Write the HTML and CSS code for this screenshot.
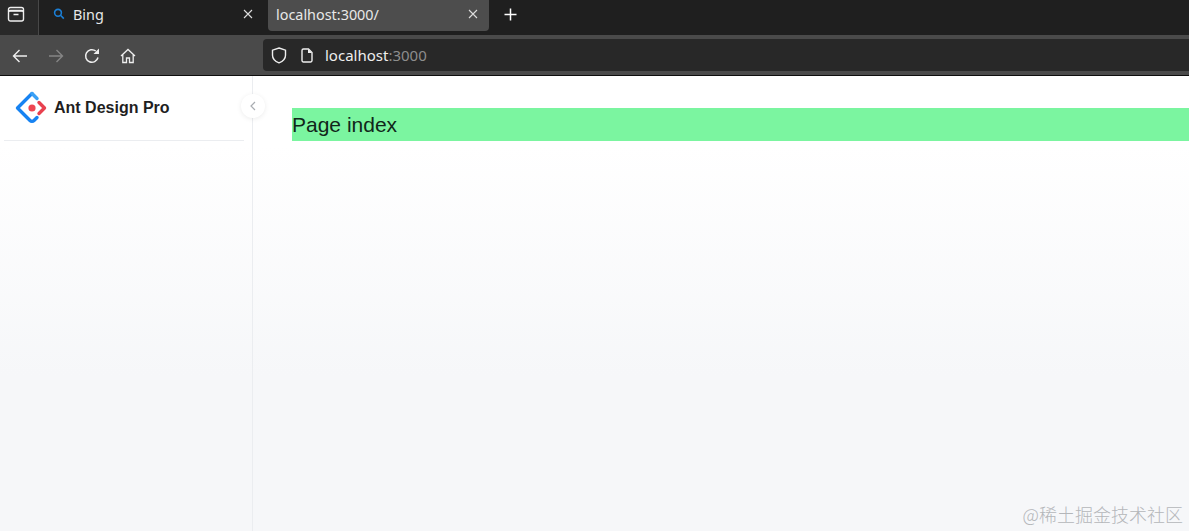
FILE: index.html
```html
<!DOCTYPE html>
<html lang="en">
<head>
<meta charset="utf-8">
<title>localhost:3000</title>
<link rel="stylesheet" href="styles.css">
</head>
<body>
<div class="browser">
  <div class="tabbar">
    <div class="tabs-btn">
      <svg width="18" height="18" viewBox="0 0 18 18" fill="none" stroke="#eee" stroke-width="1.400"><rect x="1.500" y="5.500" width="15" height="10.500" rx="2"/><path d="M3.500 2.500h11a2 2 0 0 1 2 2v1.500h-15V4.500a2 2 0 0 1 2-2zM6.500 9.500h5"/></svg>
    </div>
    <div class="tab">
      <svg class="tab-icon" width="12" height="12" viewBox="0 0 12 12" fill="none" stroke="#1b7fd6" stroke-width="1.600"><circle cx="5" cy="4.800" r="3.400"/><path d="M7.500 7.300l3.300 3.300"/></svg>
      <span class="tab-title">Bing</span>
      <svg class="tab-close" width="10" height="10" viewBox="0 0 10 10" stroke="#ddd" stroke-width="1.100"><path d="M1 1l8 8M9 1l-8 8"/></svg>
    </div>
    <div class="tab tab-active">
      <span class="tab-title">localhost:3000/</span>
      <svg class="tab-close" width="10" height="10" viewBox="0 0 10 10" stroke="#ddd" stroke-width="1.100"><path d="M1 1l8 8M9 1l-8 8"/></svg>
    </div>
    <svg class="new-tab" width="13" height="13" viewBox="0 0 13 13" stroke="#fff" stroke-width="1.500"><path d="M6.500 0.500v12M0.500 6.500h12"/></svg>
  </div>
  <div class="toolbar">
    <div class="nav">
      <svg class="nav-icon" width="16" height="16" viewBox="0 0 16 16" fill="none" stroke="#eee" stroke-width="1.400"><path d="M15 8H1.500M7.500 2L1.500 8l6 6"/></svg>
      <svg class="nav-icon" width="16" height="16" viewBox="0 0 16 16" fill="none" stroke="#858585" stroke-width="1.400"><path d="M1 8h13.500M8.500 2l6 6-6 6"/></svg>
      <svg class="nav-icon" width="16" height="16" viewBox="0 0 16 16" fill="none" stroke="#eee" stroke-width="1.500"><path d="M14 9.500A6.300 6.300 0 1 1 11.800 3"/><path d="M15 0.500v5.500h-5.500z" fill="#eee" stroke="none"/></svg>
      <svg class="nav-icon" width="16" height="16" viewBox="0 0 16 16" fill="none" stroke="#eee" stroke-width="1.300"><path d="M1 8l7-6.500L15 8M2.800 6.500v8h3.700v-4.500h3v4.500h3.700v-8"/></svg>
    </div>
    <div class="urlbar">
      <svg class="shield" width="16" height="17" viewBox="0 0 16 17" fill="none" stroke="#eee" stroke-width="1.400"><path d="M8 1l6.500 2.200v5c0 3.600-3 6.300-6.500 7.600-3.500-1.300-6.500-4-6.500-7.600v-5z"/></svg>
      <svg class="page" width="12" height="15" viewBox="0 0 12 15" fill="none" stroke="#eee" stroke-width="1.400"><path d="M1 2.500a1.500 1.500 0 0 1 1.500-1.500h5L11 4.500v8a1.500 1.500 0 0 1-1.500 1.500h-7A1.500 1.500 0 0 1 1 12.500z"/><path d="M7 1v4h4" fill="#eee" stroke="none"/></svg>
      <span class="url">localhost<span class="url-dim">:3000</span></span>
    </div>
  </div>
</div>
<div class="app">
  <aside class="sider">
    <div class="logo-row">
      <svg class="logo" width="34" height="34" viewBox="0 0 34 34" fill="none">
        <path d="M17 2.500L2.500 17 15 29.500c1.100 1.100 2.900 1.100 4 0l3-3" stroke="#1783f2" stroke-width="3.400" stroke-linecap="round" stroke-linejoin="round"/>
        <path d="M17 2.500l5 5" stroke="#3aa0f5" stroke-width="3.400" stroke-linecap="round"/>
        <path d="M24 11.500l5.500 5.500-5.500 5.500" stroke="#e8414f" stroke-width="3.400" stroke-linecap="round" stroke-linejoin="round"/>
        <circle cx="17" cy="17" r="3.600" fill="#ee4652"/>
      </svg>
      <span class="brand">Ant Design Pro</span>
    </div>
    <div class="sider-rule"></div>
    <button class="collapse" type="button" aria-label="Collapse">
      <svg width="6" height="10" viewBox="0 0 6 10" fill="none" stroke="#a9acb1" stroke-width="1.200"><path d="M5 1L1 5l4 4"/></svg>
    </button>
  </aside>
  <main class="content">
    <div class="page-index">Page index</div>
  </main>
</div>
<div class="watermark">@稀土掘金技术社区</div>
</body>
</html>
```
FILE: styles.css
```css
* { box-sizing: border-box; }
html, body { height: 100%; }
body {
  margin: 0;
  height: 531px;
  overflow: hidden;
  display: flex;
  flex-direction: column;
  font-family: "Liberation Sans", Arial, sans-serif;
  background: #fff;
  position: relative;
}
.browser { flex: none; font-family: "Noto Sans", Roboto, sans-serif; }
.tabbar {
  height: 35px;
  background: #1f1f1f;
  display: flex;
  align-items: flex-start;
}
.tabs-btn {
  width: 39px;
  height: 35px;
  background: #292929;
  border-right: 1px solid #484848;
  padding: 0 0 7px 7px;
  display: flex;
  align-items: center;
}
.tab {
  width: 229px;
  height: 31px;
  padding: 0 15px 3px 14px;
  display: flex;
  align-items: center;
  color: #e8e8e8;
  font-size: 14.400px;
  border-radius: 0 0 4px 4px;
}
.tab-icon { margin-right: 8px; }
.tab-title { flex: 1; }
.tab-active {
  width: 221px;
  background: #4d4d4d;
  padding-left: 8px;
  padding-right: 11px;
}
.new-tab { margin: 8px 0 0 15px; }
.toolbar {
  height: 41px;
  background: #4a4a4a;
  border-bottom: 1px solid #0e0e0e;
  display: flex;
  align-items: center;
}
.nav {
  width: 263px;
  flex: none;
  display: flex;
  gap: 20px;
  padding: 2px 0 0 12px;
  align-items: center;
}
.urlbar {
  flex: 1;
  height: 32px;
  background: #282828;
  border-radius: 4px 0 0 4px;
  display: flex;
  align-items: center;
  padding-left: 8px;
  color: #eee;
  font-size: 15px;
}
.page { margin-left: 14px; }
.url { margin-left: 12px; }
.url-dim { color: #8d8d8d; }
.app {
  flex: 1;
  display: flex;
  background: linear-gradient(#fff 0, #fff 70px, #f6f7f9 300px, #f6f7f9 100%);
}
.sider {
  width: 253px;
  flex: none;
  border-right: 1px solid #ebedf0;
  position: relative;
  padding: 0 8px 0 4px;
}
.logo-row {
  height: 64px;
  display: flex;
  align-items: center;
  padding-left: 11px;
  gap: 5px;
}
.logo { flex: none; }
.brand {
  font-size: 16px;
  font-weight: 700;
  color: #1f1f1f;
}
.sider-rule { height: 1px; background: #ebedf0; }
.collapse {
  position: absolute;
  top: 18px;
  right: -13px;
  width: 24px;
  height: 24px;
  padding: 0;
  border: 0;
  border-radius: 50%;
  background: #fff;
  box-shadow: 0 1px 5px rgba(0, 0, 0, .08);
  display: flex;
  align-items: center;
  justify-content: center;
}
.content { flex: 1; padding: 32px 0 0 39px; min-width: 0; }
.page-index {
  height: 33px;
  line-height: 33px;
  background: #7bf5a0;
  color: #11261a;
  font-size: 21px;
}
.watermark {
  position: absolute;
  right: 6px;
  bottom: 5px;
  color: #b4b6b9;
  font-family: "Noto Sans CJK SC", "Liberation Sans", sans-serif;
  font-size: 18px;
  font-weight: 300;
  line-height: 24px;
}
```
